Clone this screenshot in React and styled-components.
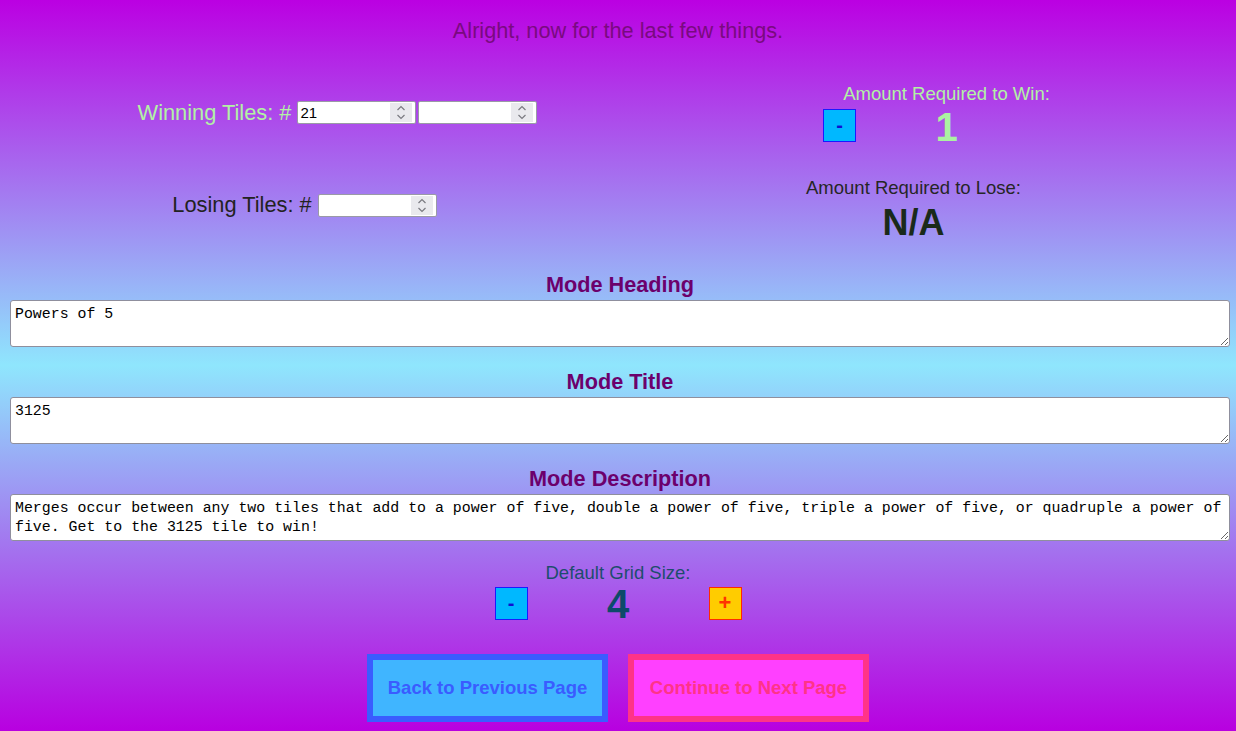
import React from "react";
import styled, { createGlobalStyle } from "styled-components";

const Global = createGlobalStyle`
  html, body { margin: 0; padding: 0; }
  body { font-family: "Liberation Sans", Arial, sans-serif; }
`;

const Page = styled.div`
  min-height: 731px;
  box-sizing: border-box;
  background: linear-gradient(to bottom, #bb00e2 0%, #8fe6fd 50%, #b800e0 100%);
  display: flex;
  flex-direction: column;
  padding-top: 20px;
`;

const Intro = styled.div`
  text-align: center;
  font-size: 21.7px;
  line-height: 22px;
  color: #7a0a80;
`;

const Row = styled.div`
  display: grid;
  grid-template-columns: 609px 609px;
  padding-left: ${(p) => p.$indent || 0}px;
  margin-top: ${(p) => p.$top}px;
  align-items: center;
`;

const Cell = styled.div`
  display: flex;
  flex-direction: column;
  align-items: center;
  justify-content: center;
`;

const TileLine = styled.div`
  display: flex;
  align-items: center;
  gap: 6px;
  margin-top: ${(p) => p.$top || 0}px;
`;

const TileLabel = styled.span`
  font-size: 21.8px;
  line-height: 24px;
  color: ${(p) => p.$color};
`;

const Inputs = styled.div`
  display: flex;
  gap: 2px;
`;

const NumBox = styled.div`
  width: 119px;
  height: 23px;
  box-sizing: border-box;
  background: #fff;
  border: 1px solid #9a9aa6;
  border-radius: 2px;
  display: flex;
  align-items: center;
  padding: 0 3px 0 2px;
`;

const NumInput = styled.input`
  flex: 1;
  min-width: 0;
  border: none;
  outline: none;
  padding: 0;
  font-family: "Liberation Sans", Arial, sans-serif;
  font-size: 15px;
  color: #000;
  background: transparent;
`;

const Spin = styled.div`
  width: 22px;
  height: 19px;
  background: #e9e9ed;
  display: flex;
  align-items: center;
  justify-content: center;
`;

const AmountLabel = styled.div`
  font-size: 18.5px;
  line-height: 20px;
  color: ${(p) => p.$color};
`;

const Controls = styled.div`
  display: flex;
  align-items: center;
  height: 40px;
  margin-top: ${(p) => p.$top || 0}px;
`;

const Small = styled.button`
  width: 33px;
  height: 33px;
  box-sizing: border-box;
  padding: 0;
  border: 1px solid ${(p) => (p.$plus ? "#ff2a00" : "#1a1aff")};
  background: ${(p) => (p.$plus ? "#ffcc00" : "#00b8ff")};
  color: ${(p) => (p.$plus ? "#ff3300" : "#1010d0")};
  font-family: "Liberation Sans", Arial, sans-serif;
  font-weight: bold;
  font-size: ${(p) => (p.$plus ? "22px" : "20px")};
  line-height: 1;
  display: flex;
  align-items: center;
  justify-content: center;
  visibility: ${(p) => (p.$hidden ? "hidden" : "visible")};
`;

const Value = styled.div`
  width: 181px;
  text-align: center;
  font-weight: bold;
  font-size: 40px;
  line-height: 40px;
  padding-top: ${(p) => p.$drop || 0}px;
  color: ${(p) => p.$color};
`;

const BigText = styled.div`
  font-weight: bold;
  font-size: 36px;
  line-height: 42px;
  color: #1a2a1a;
  margin-top: 4px;
`;

const Section = styled.div`
  padding: 0 6px 0 10px;
  margin-top: ${(p) => p.$top}px;
  display: flex;
  flex-direction: column;
  align-items: center;
`;

const SectionLabel = styled.div`
  font-size: 21.7px;
  font-weight: bold;
  line-height: 23px;
  color: #6c006c;
  margin-bottom: 4px;
`;

const Area = styled.textarea`
  width: 100%;
  height: 47px;
  box-sizing: border-box;
  border: 1px solid #8f8f9d;
  border-radius: 3px;
  padding: 4px 4px 2px;
  font-family: "Liberation Mono", "DejaVu Sans Mono", monospace;
  font-size: 14.9px;
  line-height: 19px;
  color: #000;
  background: #fff;
  outline: none;
`;

const GridLabel = styled.div`
  text-align: center;
  font-size: 18.5px;
  line-height: 20px;
  color: #1d4d6d;
  margin-top: 22px;
`;

const Center = styled.div`
  display: flex;
  justify-content: center;
  gap: ${(p) => p.$gap || 0}px;
  margin-top: ${(p) => p.$top || 0}px;
`;

const NavButton = styled.button`
  width: 241px;
  height: 68px;
  box-sizing: border-box;
  border: 6px solid ${(p) => p.$edge};
  background: ${(p) => p.$bg};
  color: ${(p) => p.$edge};
  font-family: "Liberation Sans", Arial, sans-serif;
  font-weight: bold;
  font-size: 18.5px;
  padding: 0;
`;

const Chevrons = () => (
  <svg width="12" height="17" viewBox="0 0 12 17" fill="none" stroke="#7a7a80" strokeWidth="1.2">
    <polyline points="2.5,6 6,2.5 9.5,6" />
    <polyline points="2.5,11 6,14.5 9.5,11" />
  </svg>
);

const NumberField = ({ value }) => (
  <NumBox>
    <NumInput type="text" defaultValue={value} />
    <Spin>
      <Chevrons />
    </Spin>
  </NumBox>
);

export default function App() {
  return (
    <>
      <Global />
      <Page>
        <Intro>Alright, now for the last few things.</Intro>

        <Row $indent={33} $top={42}>
          <Cell>
            <TileLine $top={-4}>
              <TileLabel $color="#b2f2a4">Winning Tiles: #</TileLabel>
              <Inputs>
                <NumberField value="21" />
                <NumberField value="" />
              </Inputs>
            </TileLine>
          </Cell>
          <Cell>
            <AmountLabel $color="#b2f2a4">Amount Required to Win:</AmountLabel>
            <Controls $top={1}>
              <Small>-</Small>
              <Value $color="#abf2a2" $drop={4}>1</Value>
              <Small $plus $hidden>+</Small>
            </Controls>
          </Cell>
        </Row>

        <Row $top={33}>
          <Cell>
            <TileLine $top={-12}>
              <TileLabel $color="#222222">Losing Tiles: #</TileLabel>
              <NumberField value="" />
            </TileLine>
          </Cell>
          <Cell>
            <AmountLabel $color="#262626">Amount Required to Lose:</AmountLabel>
            <BigText>N/A</BigText>
          </Cell>
        </Row>

        <Section $top={29}>
          <SectionLabel>Mode Heading</SectionLabel>
          <Area defaultValue="Powers of 5" />
        </Section>
        <Section $top={23}>
          <SectionLabel>Mode Title</SectionLabel>
          <Area defaultValue="3125" />
        </Section>
        <Section $top={23}>
          <SectionLabel>Mode Description</SectionLabel>
          <Area defaultValue="Merges occur between any two tiles that add to a power of five, double a power of five, triple a power of five, or quadruple a power of five. Get to the 3125 tile to win!" />
        </Section>

        <GridLabel>Default Grid Size:</GridLabel>
        <Center>
          <Controls>
            <Small>-</Small>
            <Value $color="#0d4a6a" $drop={2}>4</Value>
            <Small $plus>+</Small>
          </Controls>
        </Center>

        <Center $gap={20} $top={31}>
          <NavButton $edge="#3a5cff" $bg="#40b5ff">Back to Previous Page</NavButton>
          <NavButton $edge="#ff3388" $bg="#ff40ff">Continue to Next Page</NavButton>
        </Center>
      </Page>
    </>
  );
}
